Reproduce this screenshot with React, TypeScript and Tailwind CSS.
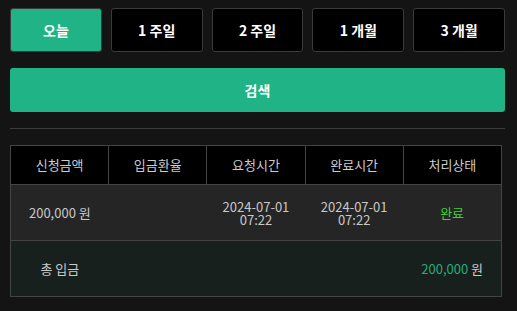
import React, { useState } from 'react';

const periods = ['오늘', '1 주일', '2 주일', '1 개월', '3 개월'];
const headers = ['신청금액', '입금환율', '요청시간', '완료시간', '처리상태'];

const font = { fontFamily: '"Noto Sans CJK KR", "Noto Sans", sans-serif' };

export default function App() {
  const [active, setActive] = useState(0);

  return (
    <div className="w-[517px] h-[311px] bg-[#141414] pl-[10px] pr-[12px] pt-[8px]" style={font}>
      {/* 기간 버튼 */}
      <div className="grid grid-cols-5 gap-[9px]">
        {periods.map((p, i) => (
          <button
            key={p}
            onClick={() => setActive(i)}
            className={`h-[44px] rounded-[3px] border text-[14px] font-bold text-white ${
              i === active ? 'bg-[#20b386] border-[#3a3a3a]' : 'bg-black border-[#3a3a3a]'
            }`}
          >
            {p}
          </button>
        ))}
      </div>

      {/* 검색 */}
      <button className="mt-[16px] w-full h-[44px] rounded-[3px] bg-[#20b386] text-white text-[14px] font-bold">
        검색
      </button>

      <div className="mt-[16px] h-px bg-[#3c3c3c]" />

      {/* 테이블 */}
      <table className="mt-[16px] w-[492px] border-collapse table-fixed text-[13px]">
        <thead>
          <tr className="bg-black h-[39px]">
            {headers.map((h) => (
              <th key={h} className="border border-[#444] font-normal text-[#c9ccd0]">
                {h}
              </th>
            ))}
          </tr>
        </thead>
        <tbody>
          <tr className="bg-[#252525] h-[56px] text-[#c9c9c9]">
            <td className="border-y border-l border-[#444] text-center">200,000 원</td>
            <td className="border-y border-[#444]" />
            <td className="border-y border-[#444] text-center leading-[13px]">
              2024-07-01
              <br />
              07:22
            </td>
            <td className="border-y border-[#444] text-center leading-[13px]">
              2024-07-01
              <br />
              07:22
            </td>
            <td className="border-y border-r border-[#444] text-center text-[#3fcf36]">완료</td>
          </tr>
          <tr className="bg-[#17201d] h-[56px] text-[#c9c9c9]">
            <td className="border-y border-l border-[#444] text-center">총 입금</td>
            <td className="border-y border-[#444]" />
            <td className="border-y border-[#444]" />
            <td className="border-y border-[#444]" />
            <td className="border-y border-r border-[#444] text-center">
              <span className="text-[#1fae7a]">200,000</span> 원
            </td>
          </tr>
        </tbody>
      </table>
    </div>
  );
}
